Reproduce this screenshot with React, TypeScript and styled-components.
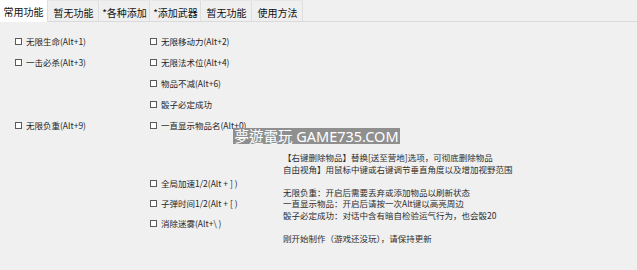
import React from "react";
import styled, { createGlobalStyle } from "styled-components";

const tabs = ["常用功能", "暂无功能", "*各种添加", "*添加武器", "暂无功能", "使用方法"];

type Opt = { label: string; col: number; row: number };

const options: Opt[] = [
  { label: "无限生命(Alt+1)", col: 1, row: 1 },
  { label: "无限移动力(Alt+2)", col: 2, row: 1 },
  { label: "一击必杀(Alt+3)", col: 1, row: 2 },
  { label: "无限法术位(Alt+4)", col: 2, row: 2 },
  { label: "物品不减(Alt+6)", col: 2, row: 3 },
  { label: "骰子必定成功", col: 2, row: 4 },
  { label: "无限负重(Alt+9)", col: 1, row: 5 },
  { label: "一直显示物品名(Alt+0)", col: 2, row: 5 },
];

const lower = ["全局加速1/2(Alt + ] )", "子弹时间1/2(Alt + [ )", "消除迷雾(Alt+\\ )"];

const notes = [
  "【右键删除物品】替换[送至营地]选项，可彻底删除物品",
  "自由视角】用鼠标中键或右键调节垂直角度以及增加视野范围",
  "",
  "无限负重：开启后需要丢弃或添加物品以刷新状态",
  "一直显示物品：开启后请按一次Alt键以高亮周边",
  "骰子必定成功：对话中含有暗自检验运气行为，也会骰20",
  "",
  "刚开始制作（游戏还没玩），请保持更新",
];

export default function App() {
  return (
    <>
      <GlobalStyle />
      <Window>
        <TabBar>
          {tabs.map((t, i) => (
            <Tab key={i} $active={i === 0}>
              {t}
            </Tab>
          ))}
        </TabBar>
        <Panel>
          <LeftArea>
            <OptionGrid>
              {options.map((o) => (
                <CheckRow key={o.label} $col={o.col} $row={o.row}>
                  <Box />
                  <span>{o.label}</span>
                </CheckRow>
              ))}
            </OptionGrid>
            <LowerGroup>
              {lower.map((l) => (
                <CheckRow key={l} $col={1} $row={0}>
                  <Box />
                  <span>{l}</span>
                </CheckRow>
              ))}
            </LowerGroup>
          </LeftArea>
          <Notes>
            {notes.map((n, i) => (
              <NoteLine key={i}>{n || "\u00a0"}</NoteLine>
            ))}
          </Notes>
          <Watermark>夢遊電玩 GAME735.COM</Watermark>
        </Panel>
      </Window>
    </>
  );
}

const GlobalStyle = createGlobalStyle`
  html, body {
    margin: 0;
    padding: 0;
    background: #f0f0f0;
  }
  body {
    font-family: "Noto Sans CJK SC", "Noto Sans", sans-serif;
  }
`;

const Window = styled.div`
  width: 637px;
  height: 270px;
  background: #f0f0f0;
  overflow: hidden;
  display: flex;
  flex-direction: column;
`;

const TabBar = styled.div`
  display: flex;
  height: 21px;
  border-bottom: 1px solid #dadada;
`;

const Tab = styled.div<{ $active?: boolean }>`
  width: ${(p) => (p.$active ? "48px" : "50px")};
  box-sizing: border-box;
  margin-left: ${(p) => (p.$active ? "0" : "1px")};
  display: flex;
  align-items: center;
  justify-content: center;
  padding-top: ${(p) => (p.$active ? "0" : "3px")};
  font-size: 10px;
  color: #111;
  background: ${(p) => (p.$active ? "#ffffff" : "#efefef")};
  border-right: 1px solid #dedede;
  border-top: ${(p) => (p.$active ? "none" : "1px solid #e6e6e6")};
  margin-bottom: ${(p) => (p.$active ? "-1px" : "0")};
  white-space: nowrap;
`;

const Panel = styled.div`
  position: relative;
  flex: 1;
  display: flex;
  padding: 9px 0 0 15px;
`;

const LeftArea = styled.div`
  width: 268px;
  display: flex;
  flex-direction: column;
`;

const OptionGrid = styled.div`
  display: grid;
  grid-template-columns: 135px 133px;
  grid-auto-rows: 21px;
`;

const CheckRow = styled.div<{ $col: number; $row: number }>`
  grid-column: ${(p) => p.$col};
  grid-row: ${(p) => (p.$row ? p.$row : "auto")};
  display: flex;
  align-items: center;
  gap: 4px;
  height: 20px;
  font-size: 8.5px;
  color: #262626;
  white-space: nowrap;
`;

const Box = styled.span`
  width: 7px;
  height: 7px;
  box-sizing: border-box;
  border: 1px solid #5a5a5a;
  background: #fff;
  flex-shrink: 0;
`;

const LowerGroup = styled.div`
  margin: 37px 0 0 135px;
  display: flex;
  flex-direction: column;
`;

const Notes = styled.div`
  padding-top: 121px;
  display: flex;
  flex-direction: column;
`;

const NoteLine = styled.div`
  font-size: 8.5px;
  line-height: 11.5px;
  color: #2e2e2e;
  white-space: nowrap;
`;

const Watermark = styled.div`
  position: absolute;
  left: 233px;
  top: 106px;
  width: 167px;
  height: 16px;
  background: #8f8f8f;
  color: #fff;
  font-family: "Noto Sans", "Noto Sans CJK TC", sans-serif;
  font-size: 14.5px;
  line-height: 16px;
  text-align: center;
  white-space: nowrap;
`;
